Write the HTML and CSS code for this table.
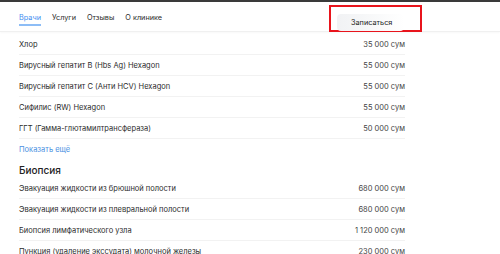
FILE: index.html
```html
<!DOCTYPE html>
<html lang="ru">

<head>
    <meta charset="UTF-8">
    <meta name="viewport" content="width=device-width, initial-scale=1.0">
    <title>Клиника — услуги</title>
    <link rel="stylesheet" href="styles.css">
</head>

<body>

    <div class="topbar"></div>

    <!-- вкладки и кнопка записи -->
    <div class="header">
        <nav class="tabs">
            <a class="tab active" href="#">Врачи</a>
            <a class="tab" href="#">Услуги</a>
            <a class="tab" href="#">Отзывы</a>
            <a class="tab" href="#">О клинике</a>
        </nav>
        <div class="book-box">
            <button class="book-btn">Записаться</button>
        </div>
    </div>

    <div class="content">
        <ul class="price-list">
            <li class="price-row"><span>Хлор</span><span class="price">35 000 сум</span></li>
            <li class="price-row"><span>Вирусный гепатит В (Hbs Ag) Hexagon</span><span class="price">55 000 сум</span></li>
            <li class="price-row"><span>Вирусный гепатит С (Анти HCV) Hexagon</span><span class="price">55 000 сум</span></li>
            <li class="price-row"><span>Сифилис (RW) Hexagon</span><span class="price">55 000 сум</span></li>
            <li class="price-row"><span>ГГТ (Гамма-глютамилтрансфераза)</span><span class="price">50 000 сум</span></li>
        </ul>
        <a class="more" href="#">Показать ещё</a>

        <h2 class="group-title">Биопсия</h2>
        <ul class="price-list">
            <li class="price-row"><span>Эвакуация жидкости из брюшной полости</span><span class="price">680 000 сум</span></li>
            <li class="price-row"><span>Эвакуация жидкости из плевральной полости</span><span class="price">680 000 сум</span></li>
            <li class="price-row"><span>Биопсия лимфатического узла</span><span class="price">1 120 000 сум</span></li>
            <li class="price-row"><span>Пункция (удаление экссудата) молочной железы</span><span class="price">230 000 сум</span></li>
        </ul>
    </div>

</body>

</html>
```

FILE: styles.css
```css
body {
    margin: 0;
    font-family: Inter, "Noto Sans", Arial, sans-serif;
    color: #2b2b2b;
    background: #fff;
    overflow: hidden;
}

.topbar {
    height: 2px;
    background-color: #3a3a3a;
}

/* шапка с вкладками */
.header {
    display: flex;
    align-items: center;
    height: 29px;
    padding-left: 19px;
    border-bottom: 1px solid #f0f0f0;
    box-shadow: 0 1px 2px rgba(0, 0, 0, 0.03);
}

.tabs {
    display: flex;
    gap: 11px;
    align-self: flex-start;
}

.tab {
    display: flex;
    align-items: center;
    height: 24px;
    padding-top: 8px;
    box-sizing: border-box;
    font-size: 7.3px;
    color: #2b2b2b;
    text-decoration: none;
    border-bottom: 2px solid transparent;
}

.tab.active {
    color: #3d8ef0;
    border-bottom-color: #8dbdf6;
}

.book-box {
    margin-left: auto;
    margin-right: 78px;
    width: 93px;
    height: 27px;
    border: 2px solid #e8141c;
    box-sizing: border-box;
    padding: 2px 0 0 6px;
    align-self: flex-end;
    margin-bottom: -1px;
}

.book-btn {
    height: 17px;
    padding: 0 12px 0 14px;
    border: none;
    border-radius: 4px;
    background: linear-gradient(90deg, #f1f2f4 0%, #f6f7f8 40%, #fff 100%);
    font-family: inherit;
    font-size: 7.3px;
    color: #222;
}

/* список цен */
.content {
    width: 386px;
    margin-left: 19px;
}

.price-list {
    list-style: none;
    margin: 0;
    padding: 0;
}

.price-row {
    display: flex;
    justify-content: space-between;
    align-items: center;
    height: 21px;
    font-size: 7.5px;
    border-bottom: 1px solid #f2f2f2;
    box-sizing: border-box;
}

.price-row:first-child {
    height: 23px;
    padding-top: 2px;
}

.price {
    color: #444;
}

.more {
    display: block;
    margin-top: 6px;
    font-size: 7.5px;
    color: #4a90e2;
    text-decoration: none;
}

.group-title {
    margin: 10px 0 0;
    font-size: 10px;
    font-weight: 500;
    color: #222;
}
```
